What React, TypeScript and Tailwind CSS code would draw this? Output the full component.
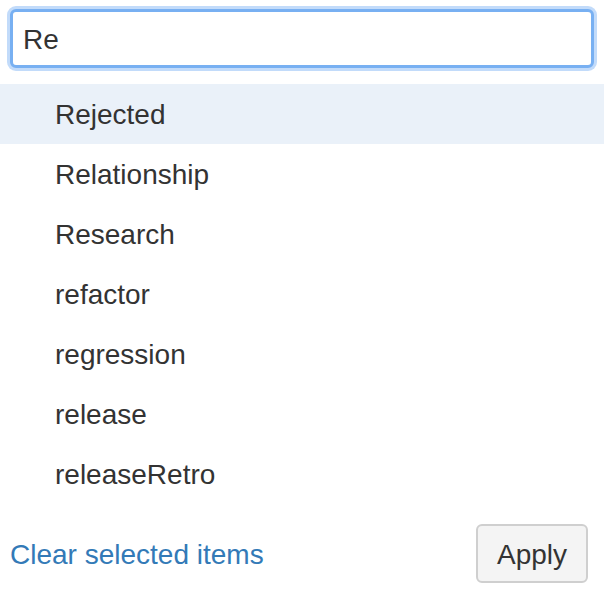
const items = ['Rejected', 'Relationship', 'Research', 'refactor', 'regression', 'release', 'releaseRetro']

export default function App() {
  return (
    <div className="w-[604px] h-[598px] bg-white text-[#333] font-['Liberation_Sans',Arial,sans-serif] text-[28px] overflow-hidden">
      <div className="px-[10px] pt-[9px]">
        <div className="h-[59px] rounded-[6px] border-[3px] border-[#78b0f2] shadow-[0_0_0_3px_#c2dbfa] bg-white flex items-center px-[10px] pt-[2px]">
          <span className="leading-none">Re</span>
        </div>
      </div>
      <ul className="mt-[16px]">
        {items.map((item, i) => (
          <li
            key={item}
            className={`h-[60px] flex items-center pl-[55px] pt-[2px] ${i === 0 ? 'bg-[#eaf1f9]' : ''}`}
          >
            {item}
          </li>
        ))}
      </ul>
      <div className="flex items-center justify-between pl-[10px] pr-[16px] pt-[20px]">
        <a className="text-[#337ab7] pt-[2px]">Clear selected items</a>
        <button className="w-[112px] h-[59px] rounded-[6px] border-2 border-[#cfcfcf] bg-[#f4f4f4] text-[#333] flex items-center justify-center pt-[2px]">
          Apply
        </button>
      </div>
    </div>
  )
}
